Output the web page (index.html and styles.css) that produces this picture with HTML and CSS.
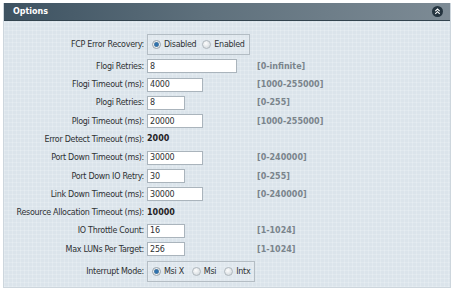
FILE: index.html
```html
<!DOCTYPE html>
<html>

<head>
  <meta charset="utf-8">
  <link rel="stylesheet" href="styles.css">
</head>

<body>

  <div class="panel">
    <div class="panel-head">
      <span class="panel-title">Options</span>
      <span class="collapse">
        <svg width="11" height="11" viewBox="0 0 11 11">
          <circle cx="5.5" cy="5.5" r="5.5" fill="#24343f"/>
          <path d="M3.3 5.2 L5.5 3.1 L7.7 5.2 M3.3 7.8 L5.5 5.7 L7.7 7.8" fill="none" stroke="#fff" stroke-width="1.1"/>
        </svg>
      </span>
    </div>

    <div class="panel-body">
      <div class="form">
        <label>FCP Error Recovery:</label>
        <div class="radios">
          <span class="radio checked"></span><span class="opt">Disabled</span>
          <span class="radio"></span><span class="opt">Enabled</span>
        </div>
        <span></span>

        <label>Flogi Retries:</label>
        <div><input class="w-long" type="text" value="8"></div>
        <span class="hint">[0-infinite]</span>

        <label>Flogi Timeout (ms):</label>
        <div><input class="w-mid" type="text" value="4000"></div>
        <span class="hint">[1000-255000]</span>

        <label>Plogi Retries:</label>
        <div><input class="w-short" type="text" value="8"></div>
        <span class="hint">[0-255]</span>

        <label>Plogi Timeout (ms):</label>
        <div><input class="w-mid" type="text" value="20000"></div>
        <span class="hint">[1000-255000]</span>

        <label>Error Detect Timeout (ms):</label>
        <div class="value">2000</div>
        <span></span>

        <label>Port Down Timeout (ms):</label>
        <div><input class="w-mid" type="text" value="30000"></div>
        <span class="hint">[0-240000]</span>

        <label>Port Down IO Retry:</label>
        <div><input class="w-short" type="text" value="30"></div>
        <span class="hint">[0-255]</span>

        <label>Link Down Timeout (ms):</label>
        <div><input class="w-mid" type="text" value="30000"></div>
        <span class="hint">[0-240000]</span>

        <label>Resource Allocation Timeout (ms):</label>
        <div class="value">10000</div>
        <span></span>

        <label>IO Throttle Count:</label>
        <div><input class="w-short" type="text" value="16"></div>
        <span class="hint">[1-1024]</span>

        <label>Max LUNs Per Target:</label>
        <div><input class="w-short" type="text" value="256"></div>
        <span class="hint">[1-1024]</span>

        <label>Interrupt Mode:</label>
        <div class="radios wide">
          <span class="radio checked"></span><span class="opt">Msi X</span>
          <span class="radio"></span><span class="opt">Msi</span>
          <span class="radio"></span><span class="opt">Intx</span>
        </div>
        <span></span>
      </div>
    </div>
  </div>

</body>

</html>
```

FILE: styles.css
```css
body {
  margin: 3px;
  background-color: #fff;
  font-family: "DejaVu Sans", sans-serif;
  font-size: 8px;
  color: #2e3133;
}

.panel {
  width: 448px;
  border: 1px solid #cdd6dd;
  border-top: none;
  box-sizing: border-box;
}

.panel-head {
  height: 18px;
  display: flex;
  align-items: center;
  justify-content: space-between;
  padding: 0 7px 0 9px;
  background: linear-gradient(90deg, #3d5261, #5e707c 45%, #7d8b95);
  border-bottom: 1px solid #33444f;
  box-sizing: border-box;
}

.panel-title {
  color: #fff;
  font-weight: bold;
  font-size: 8px;
}

.collapse svg {
  display: block;
}

.panel-body {
  height: 266px;
  padding-top: 13px;
  box-sizing: border-box;
  background-color: #dbe4eb;
  background-image:
    repeating-linear-gradient(0deg, rgba(255, 255, 255, 0.18) 0 1px, transparent 1px 4px),
    repeating-linear-gradient(90deg, rgba(255, 255, 255, 0.18) 0 1px, transparent 1px 4px);
}

/* label | field | range hint */
.form {
  display: grid;
  grid-template-columns: 140px 107px auto;
  column-gap: 3px;
  row-gap: 4.3px;
  align-items: center;
}

.form label {
  text-align: right;
  white-space: nowrap;
  letter-spacing: -0.3px;
}

.form input {
  display: block;
  height: 14px;
  box-sizing: border-box;
  margin: 0;
  padding: 0 2px;
  border: 1px solid #aab4bc;
  background: #fff;
  font-family: "DejaVu Sans", sans-serif;
  font-size: 8px;
  letter-spacing: -0.2px;
  color: #2e3133;
  outline: none;
}

.w-long { width: 90px; }
.w-mid { width: 56px; }
.w-short { width: 38px; }

.value {
  font-weight: bold;
  line-height: 14px;
  color: #1f2224;
}

.hint {
  font-weight: bold;
  color: #7a848c;
  white-space: nowrap;
}

.radios {
  justify-self: start;
  display: flex;
  align-items: center;
  height: 21px;
  padding: 0 4px;
  box-sizing: border-box;
  border: 1px solid #b4bdc4;
  background: rgba(255, 255, 255, 0.12);
  white-space: nowrap;
  letter-spacing: -0.3px;
}

.radio {
  width: 9px;
  height: 9px;
  box-sizing: border-box;
  border-radius: 50%;
  border: 1px solid #b0b8be;
  background: radial-gradient(circle at 40% 35%, #fdfdfd, #ccd3d8);
  margin-right: 3px;
}

.radio.checked {
  border-color: #98a2aa;
  background: radial-gradient(circle, #2f72ad 0 1.8px, #7a98b0 2.3px, #eef1f3 3px);
}

.opt {
  margin-right: 6px;
}

.radios.wide .opt {
  margin-right: 8px;
}

.radios .opt:last-child {
  margin-right: 0;
}
```
